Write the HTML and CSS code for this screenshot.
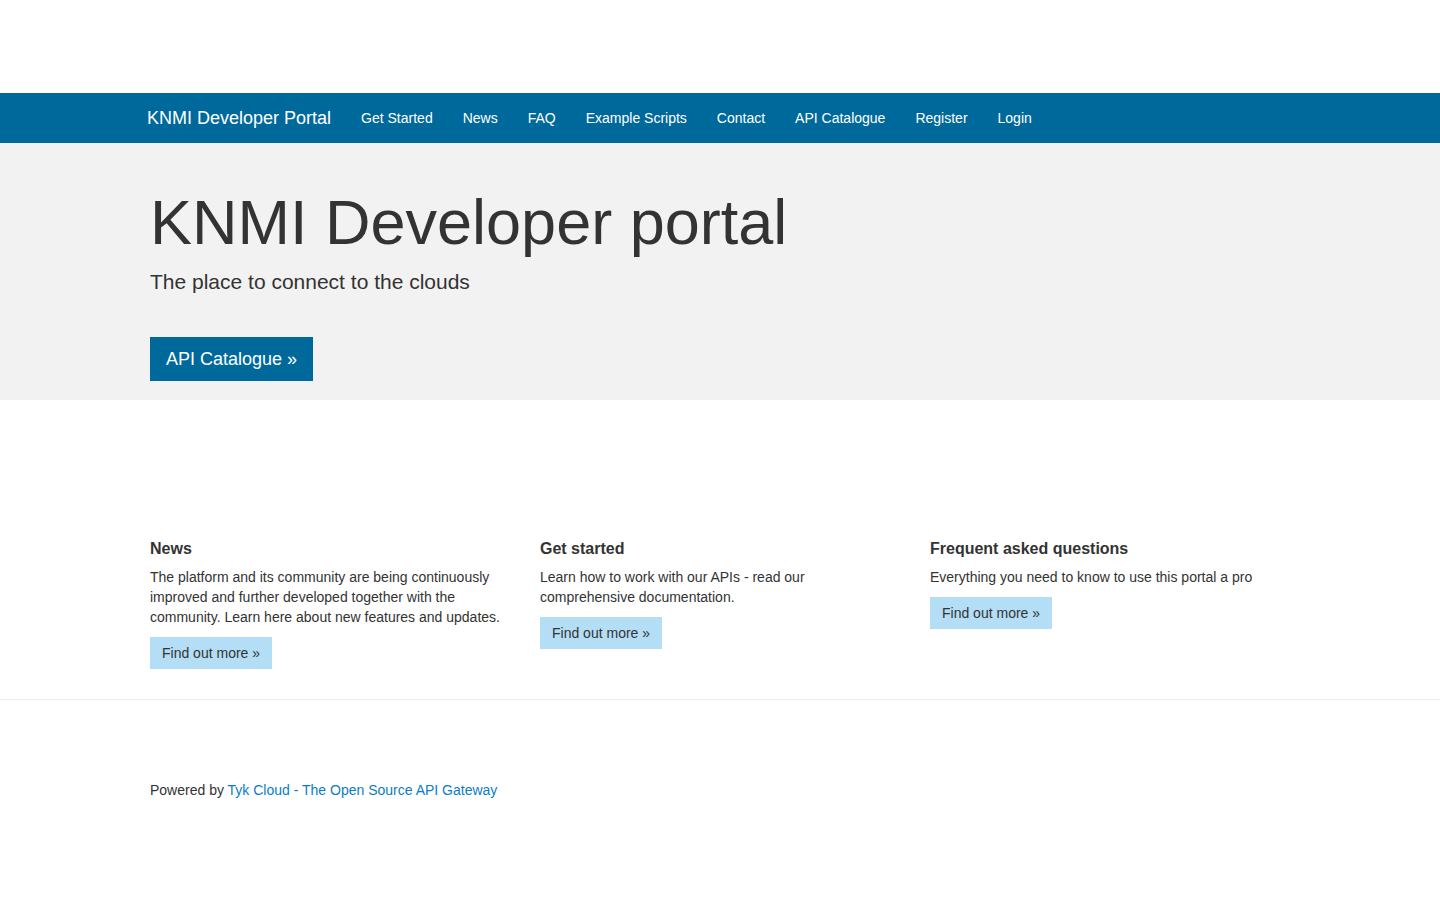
FILE: index.html
```html
<!DOCTYPE html>
<html lang="en">
<head>
<meta charset="utf-8">
<title>KNMI Developer Portal</title>
<link rel="stylesheet" href="styles.css">
</head>
<body>
<div class="topspace"></div>
<nav class="navbar">
  <div class="container nav-inner">
    <a class="brand" href="#">KNMI Developer Portal</a>
    <ul class="nav-links">
      <li><a href="#">Get Started</a></li>
      <li><a href="#">News</a></li>
      <li><a href="#">FAQ</a></li>
      <li><a href="#">Example Scripts</a></li>
      <li><a href="#">Contact</a></li>
      <li><a href="#">API Catalogue</a></li>
      <li><a href="#">Register</a></li>
      <li><a href="#">Login</a></li>
    </ul>
  </div>
</nav>
<section class="hero">
  <div class="container">
    <h1 class="hero-title">KNMI Developer portal</h1>
    <p class="lead">The place to connect to the clouds</p>
    <div class="hero-actions"><a class="btn-primary" href="#">API Catalogue »</a></div>
  </div>
</section>
<section class="features">
  <div class="container grid">
    <div class="col">
      <h2 class="col-title">News</h2>
      <p class="col-text">The platform and its community are being continuously improved and further developed together with the community. Learn here about new features and updates.</p>
      <a class="btn-light" href="#">Find out more »</a>
    </div>
    <div class="col">
      <h2 class="col-title">Get started</h2>
      <p class="col-text">Learn how to work with our APIs - read our comprehensive documentation.</p>
      <a class="btn-light" href="#">Find out more »</a>
    </div>
    <div class="col">
      <h2 class="col-title">Frequent asked questions</h2>
      <p class="col-text">Everything you need to know to use this portal a pro</p>
      <a class="btn-light" href="#">Find out more »</a>
    </div>
  </div>
</section>
<hr class="divider">
<footer class="footer">
  <div class="container">
    <p class="powered">Powered by <a href="#">Tyk Cloud - The Open Source API Gateway</a></p>
  </div>
</footer>
</body>
</html>
```

FILE: styles.css
```css
* { box-sizing: border-box; }
html, body { margin: 0; padding: 0; }
body {
  font-family: "Liberation Sans", Arial, Helvetica, sans-serif;
  font-size: 14px;
  line-height: 20px;
  color: #333333;
  background: #ffffff;
}
a { text-decoration: none; }
.container {
  width: 1170px;
  margin: 0 auto;
  padding: 0 15px;
}
.topspace { height: 93px; }
.navbar {
  background: #00699b;
  height: 50px;
}
.nav-inner {
  display: flex;
  align-items: stretch;
  height: 50px;
  padding-left: 0;
}
.brand {
  display: block;
  color: #ffffff;
  font-size: 18px;
  line-height: 20px;
  padding: 15px 15px 15px 12px;
}
.nav-links {
  list-style: none;
  margin: 0;
  padding: 0;
  display: flex;
}
.nav-links a {
  display: block;
  color: #ffffff;
  font-size: 14px;
  line-height: 20px;
  padding: 15px;
}
.hero {
  background: #f2f2f2;
  padding: 45px 0 19px;
}
.hero-title {
  margin: 0 0 10px;
  font-size: 63px;
  font-weight: 400;
  line-height: 69.3px;
  color: #333333;
}
.lead {
  margin: 0;
  font-size: 21px;
  line-height: 30px;
  color: #333333;
}
.hero-actions {
  margin-top: 40px;
  display: flex;
}
.btn-primary {
  display: block;
  background: #00699b;
  color: #ffffff;
  font-size: 18px;
  line-height: 24px;
  padding: 10px 16px;
}
.features { padding-top: 139px; }
.grid {
  display: grid;
  grid-template-columns: repeat(3, 1fr);
  padding: 0;
}
.col { padding: 0 15px; }
.col-title {
  margin: 0 0 8px;
  font-size: 16px;
  font-weight: 700;
  line-height: 19.6px;
}
.col-text { margin: 0 0 10px; }
.btn-light {
  display: inline-block;
  background: #b4ddf6;
  color: #333333;
  font-size: 14px;
  line-height: 20px;
  padding: 6px 12px;
}
.divider {
  margin: 30px 0 0;
  border: 0;
  border-top: 1px solid #eeeeee;
  height: 0;
}
.footer { padding-top: 80px; }
.powered { margin: 0 0 40px; }
.powered a { color: #0a7dc6; }
```
